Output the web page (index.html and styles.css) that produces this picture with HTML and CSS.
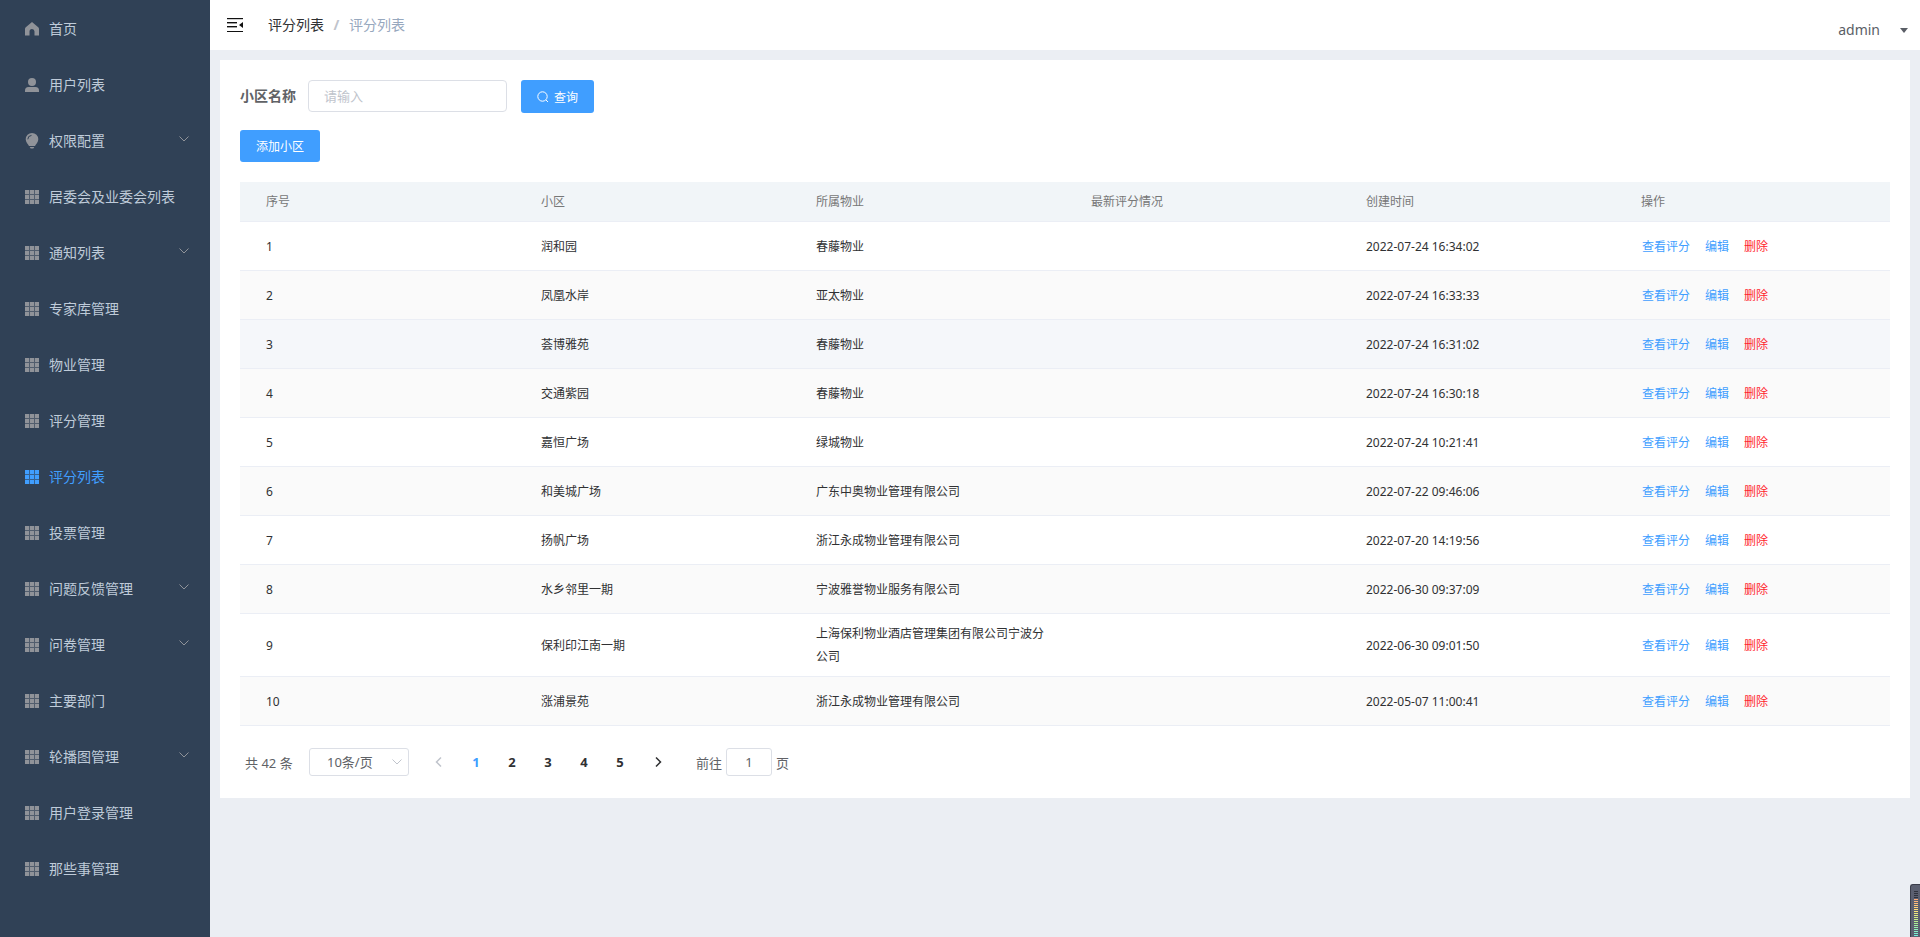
FILE: index.html
```html
<!DOCTYPE html>
<html lang="zh-CN">
<head>
<meta charset="utf-8">
<title>评分列表</title>
<link rel="stylesheet" href="styles.css">
</head>
<body>
<svg class="sprite" aria-hidden="true">
  <symbol id="grid" viewBox="0 0 14 14"><path opacity=".35" d="M0 0h14v14H0z"/><path d="M0 0h4v4H0zM5 0h4v4H5zM10 0h4v4h-4zM0 5h4v4H0zM5 5h4v4H5zM10 5h4v4h-4zM0 10h4v4H0zM5 10h4v4H5zM10 10h4v4h-4z"/></symbol>
  <symbol id="down" viewBox="0 0 12 12"><path d="M1.500 3.500 6 8l4.500-4.500" fill="none" stroke="currentColor"/></symbol>
</svg>
<div class="app">
  <nav class="sidebar">
    <a class="item" href="#"><svg class="icon" viewBox="0 0 14 14"><path d="M7 0 13.500 5.500Q14 6 14 7v6.500H9.500V9.500a2.500 2.500 0 0 0-5 0v4H0V7q0-1 .5-1.500z"/></svg><span>首页</span></a>
    <a class="item" href="#"><svg class="icon" viewBox="0 0 14 14"><circle cx="7" cy="4" r="4"/><path d="M0 14v-1.500A3.500 3.500 0 0 1 3.500 9h7a3.500 3.500 0 0 1 3.500 3.500V14z"/></svg><span>用户列表</span></a>
    <a class="item" href="#"><svg class="icon bulb" viewBox="0 0 14 16"><path d="M7 0a6.300 6.300 0 0 0-6.300 6.300C.7 9.500 3 10.700 4 13h6c1-2.300 3.300-3.500 3.300-6.700A6.300 6.300 0 0 0 7 0zM4.700 14h4.600L8.300 15.500H5.700z"/><path d="M2.800 6.300A4 4 0 0 1 6.500 2.400" fill="none" stroke="#304156"/></svg><span>权限配置</span><svg class="arrow"><use href="#down"/></svg></a>
    <a class="item" href="#"><svg class="icon"><use href="#grid"/></svg><span>居委会及业委会列表</span></a>
    <a class="item" href="#"><svg class="icon"><use href="#grid"/></svg><span>通知列表</span><svg class="arrow"><use href="#down"/></svg></a>
    <a class="item" href="#"><svg class="icon"><use href="#grid"/></svg><span>专家库管理</span></a>
    <a class="item" href="#"><svg class="icon"><use href="#grid"/></svg><span>物业管理</span></a>
    <a class="item" href="#"><svg class="icon"><use href="#grid"/></svg><span>评分管理</span></a>
    <a class="item active" href="#"><svg class="icon"><use href="#grid"/></svg><span>评分列表</span></a>
    <a class="item" href="#"><svg class="icon"><use href="#grid"/></svg><span>投票管理</span></a>
    <a class="item" href="#"><svg class="icon"><use href="#grid"/></svg><span>问题反馈管理</span><svg class="arrow"><use href="#down"/></svg></a>
    <a class="item" href="#"><svg class="icon"><use href="#grid"/></svg><span>问卷管理</span><svg class="arrow"><use href="#down"/></svg></a>
    <a class="item" href="#"><svg class="icon"><use href="#grid"/></svg><span>主要部门</span></a>
    <a class="item" href="#"><svg class="icon"><use href="#grid"/></svg><span>轮播图管理</span><svg class="arrow"><use href="#down"/></svg></a>
    <a class="item" href="#"><svg class="icon"><use href="#grid"/></svg><span>用户登录管理</span></a>
    <a class="item" href="#"><svg class="icon"><use href="#grid"/></svg><span>那些事管理</span></a>
  </nav>
  <div class="main">
    <header class="topbar">
      <button class="fold" type="button" aria-label="收起菜单"><svg width="16" height="14" viewBox="0 0 16 14"><path d="M0 0h16v1H0zM0 13h16v1H0zM0 4h10v1H0zM0 8h10v1H0zM16 4v6l-4-3z"/><path opacity=".4" d="M0 1h16v.5H0zM0 5h10v1H0zM0 9h10v1H0z"/></svg></button>
      <div class="crumbs"><a href="#">评分列表</a><span class="sep">/</span><span class="current">评分列表</span></div>
      <button class="user" type="button"><span>admin</span><svg width="8" height="5" viewBox="0 0 8 5"><path d="M0 0h8L4 5z"/></svg></button>
    </header>
    <main class="card">
      <form class="search">
        <label for="name">小区名称</label>
        <input id="name" type="text" placeholder="请输入">
        <button class="btn query" type="button"><svg width="12" height="12" viewBox="0 0 12 12"><circle cx="5.500" cy="5.500" r="4.700" fill="none" stroke="currentColor"/><path d="m9 9 2 2" stroke="currentColor"/></svg><span>查询</span></button>
      </form>
      <button class="btn add" type="button">添加小区</button>
      <table class="table">
        <thead><tr><th>序号</th><th>小区</th><th>所属物业</th><th>最新评分情况</th><th>创建时间</th><th>操作</th></tr></thead>
        <tbody>
          <tr><td>1</td><td>润和园</td><td>春藤物业</td><td></td><td>2022-07-24 16:34:02</td><td><div class="ops"><a href="#">查看评分</a><a href="#">编辑</a><a class="del" href="#">删除</a></div></td></tr>
          <tr><td>2</td><td>凤凰水岸</td><td>亚太物业</td><td></td><td>2022-07-24 16:33:33</td><td><div class="ops"><a href="#">查看评分</a><a href="#">编辑</a><a class="del" href="#">删除</a></div></td></tr>
          <tr class="hover"><td>3</td><td>荟博雅苑</td><td>春藤物业</td><td></td><td>2022-07-24 16:31:02</td><td><div class="ops"><a href="#">查看评分</a><a href="#">编辑</a><a class="del" href="#">删除</a></div></td></tr>
          <tr><td>4</td><td>交通紫园</td><td>春藤物业</td><td></td><td>2022-07-24 16:30:18</td><td><div class="ops"><a href="#">查看评分</a><a href="#">编辑</a><a class="del" href="#">删除</a></div></td></tr>
          <tr><td>5</td><td>嘉恒广场</td><td>绿城物业</td><td></td><td>2022-07-24 10:21:41</td><td><div class="ops"><a href="#">查看评分</a><a href="#">编辑</a><a class="del" href="#">删除</a></div></td></tr>
          <tr><td>6</td><td>和美城广场</td><td>广东中奥物业管理有限公司</td><td></td><td>2022-07-22 09:46:06</td><td><div class="ops"><a href="#">查看评分</a><a href="#">编辑</a><a class="del" href="#">删除</a></div></td></tr>
          <tr><td>7</td><td>扬帆广场</td><td>浙江永成物业管理有限公司</td><td></td><td>2022-07-20 14:19:56</td><td><div class="ops"><a href="#">查看评分</a><a href="#">编辑</a><a class="del" href="#">删除</a></div></td></tr>
          <tr><td>8</td><td>水乡邻里一期</td><td>宁波雅誉物业服务有限公司</td><td></td><td>2022-06-30 09:37:09</td><td><div class="ops"><a href="#">查看评分</a><a href="#">编辑</a><a class="del" href="#">删除</a></div></td></tr>
          <tr><td>9</td><td>保利印江南一期</td><td>上海保利物业酒店管理集团有限公司宁波分公司</td><td></td><td>2022-06-30 09:01:50</td><td><div class="ops"><a href="#">查看评分</a><a href="#">编辑</a><a class="del" href="#">删除</a></div></td></tr>
          <tr><td>10</td><td>涨浦景苑</td><td>浙江永成物业管理有限公司</td><td></td><td>2022-05-07 11:00:41</td><td><div class="ops"><a href="#">查看评分</a><a href="#">编辑</a><a class="del" href="#">删除</a></div></td></tr>
        </tbody>
      </table>
      <div class="pager">
        <span class="total">共 42 条</span>
        <div class="size"><select aria-label="每页条数"><option>10条/页</option></select><svg class="caret"><use href="#down"/></svg></div>
        <div class="pages">
          <button class="step" type="button" disabled aria-label="上一页"><svg width="12" height="12" viewBox="0 0 12 12"><path d="M8 1.500 3.500 6 8 10.500"/></svg></button>
          <button class="on" type="button">1</button><button type="button">2</button><button type="button">3</button><button type="button">4</button><button type="button">5</button>
          <button class="step" type="button" aria-label="下一页"><svg width="12" height="12" viewBox="0 0 12 12"><path d="M4 1.500 8.500 6 4 10.500"/></svg></button>
        </div>
        <div class="jump"><label for="page">前往</label><input id="page" type="text" value="1"><span>页</span></div>
      </div>
    </main>
  </div>
</div>
<div class="meter"><div class="bars"></div></div>
</body>
</html>
```
FILE: styles.css
```css
* { box-sizing: border-box; }
body, button, input, select { font-family: "Noto Sans", "Noto Sans CJK SC", sans-serif; }
body { margin: 0; background: #ebeef3; color: #606266; font-size: 14px; }
a { text-decoration: none; color: inherit; }
button { border: 0; padding: 0; background: none; color: inherit; cursor: pointer; }
svg { display: block; fill: currentColor; flex: none; }
.sprite { position: absolute; width: 0; height: 0; }

.app { display: flex; min-height: 100vh; }
.sidebar { width: 210px; flex: none; background: #304156; }
.item { display: flex; align-items: center; height: 56px; padding: 0 20px 0 25px; gap: 10px; color: #bfcbd9; }
.icon { width: 14px; height: 14px; margin-top: 2px; color: #909399; }
.bulb { height: 16px; }
.arrow { width: 12px; height: 12px; margin: 0 0 2px auto; color: #909399; }
.active, .active .icon { color: #409eff; }

.main { flex: 1; min-width: 0; }
.topbar { display: flex; align-items: center; height: 50px; padding: 0 12px 0 17px; background: #fff; }
.fold { color: #111; }
.crumbs { display: flex; margin: 0 auto 0 25px; line-height: 20px; color: #303133; }
.sep { width: 25px; text-align: center; color: #c0c4cc; font-weight: 700; }
.current { color: #97a8be; }
.user { display: flex; align-items: center; gap: 20px; padding-top: 10px; font-size: 14px; line-height: 20px; color: #5a5e66; }

.card { margin: 10px; padding: 20px; background: #fff; }
.search { display: flex; align-items: flex-start; line-height: 32px; }
.search label { width: 68px; font-weight: 700; }
.search input { width: 199px; height: 32px; margin-right: 14px; padding: 0 15px; border: 1px solid #dcdfe6; border-radius: 4px; font-size: 13px; }
.search input::placeholder { color: #c0c4cc; }
.btn { display: flex; align-items: center; justify-content: center; gap: 5px; height: 32px; border-radius: 3px; background: #409eff; color: #fff; font-size: 12px; font-weight: 400; }
.query { width: 73px; height: 33px; }
.add { width: 80px; margin: 17px 0 20px; }

.table { width: 100%; table-layout: fixed; border-collapse: separate; border-spacing: 0; font-size: 12px; line-height: 23px; color: #303133; }
.table th, .table td { padding: 8px 20px 8px 26px; border-bottom: 1px solid #ebeef5; text-align: left; font-weight: 400; }
.table th { background: #f1f5f8; color: #777; }
.table tbody tr:nth-child(even) { background: #fafafa; }
.table tbody .hover { background: #f5f7fa; }
.ops { display: flex; align-items: flex-end; gap: 15px; height: 32px; margin-left: 1px; line-height: 30px; color: #409eff; }
.del { color: #ff1f2d; }

.pager { display: flex; align-items: center; height: 28px; margin: 22px 0 2px; padding-left: 5px; font-size: 13px; }
.total { width: 64px; }
.size { position: relative; width: 100px; }
.size select { width: 100%; height: 28px; padding: 0 17px; appearance: none; border: 1px solid #dcdfe6; border-radius: 3px; background: #fff; color: #606266; font-size: 13px; }
.caret { position: absolute; right: 6px; top: 8px; width: 12px; height: 12px; color: #c0c4cc; pointer-events: none; }
.pages { display: flex; margin-left: 10px; color: #303133; }
.pages button { width: 36px; height: 28px; font-size: 13px; font-weight: 700; }
.pages .step { display: flex; align-items: center; justify-content: center; width: 39px; }
.pages .on { color: #409eff; }
.pages path { fill: none; stroke: currentColor; stroke-width: 1.5; }
.pages :disabled { color: #c0c4cc; }
.jump { display: flex; align-items: center; margin-left: 19px; }
.jump input { width: 46px; height: 28px; margin: 0 4px; border: 1px solid #dcdfe6; border-radius: 3px; color: #606266; text-align: center; font-size: 13px; }

.meter { position: fixed; right: 0; bottom: 0; width: 10px; height: 53px; padding: 6px 2px 0 3px; border: solid #3a3d4a; border-width: 1px 0 0 1px; border-radius: 3px 0 0 0; background: #5b5f70; }
.bars { height: 46px; background: repeating-linear-gradient(transparent 0 1px, #5b5f70 1px 2px), linear-gradient(#2f323d 0 8px, #ffa878 8px, #ffe678 20px, #b0f090 32px, #70f0e0 45px); }
```
